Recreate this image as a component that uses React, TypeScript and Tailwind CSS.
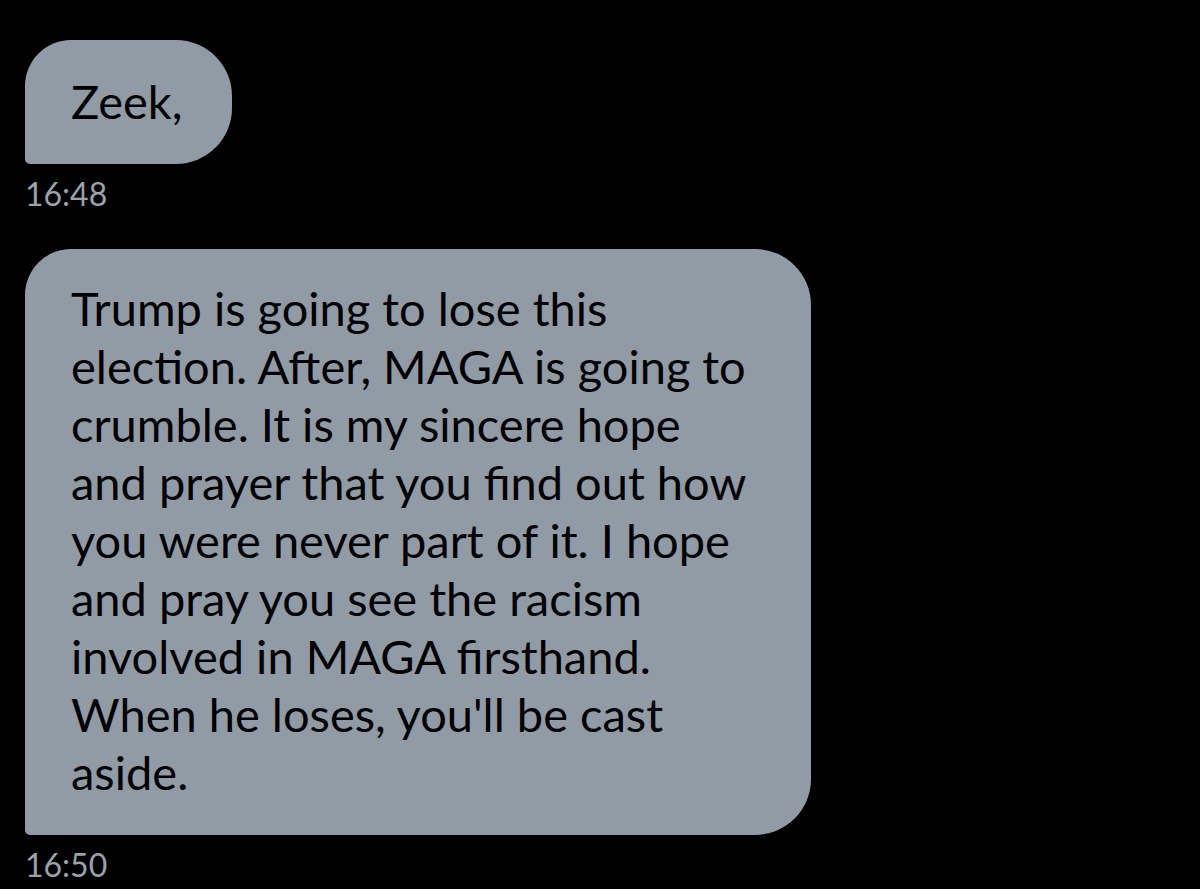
import React from "react";

interface MessageProps {
  lines: string[];
  time: string;
  width: string;
  pad: string;
}

const Message: React.FC<MessageProps> = ({ lines, time, width, pad }) => (
  <div className="flex flex-col items-start">
    <div
      className={`${width} ${pad} bg-[#919ba5] text-black rounded-tl-[46px] rounded-tr-[56px] rounded-br-[56px] rounded-bl-[5px] px-[46px] text-[47px] leading-[58px]`}
    >
      {lines.map((l, i) => (
        <div key={i} className="whitespace-nowrap">
          {l}
        </div>
      ))}
    </div>
    <div className="mt-[12px] text-[32px] leading-[36px] text-[#9aa2aa]">{time}</div>
  </div>
);

export default function App() {
  return (
    <div
      className="w-[1200px] h-[889px] bg-black overflow-hidden pl-[25px] pt-[40px] flex flex-col gap-[37px]"
      style={{ fontFamily: "Lato, 'Noto Sans', sans-serif" }}
    >
      <Message lines={["Zeek,"]} time="16:48" width="w-[207px]" pad="pt-[32px] pb-[34px]" />
      <Message
        lines={[
          "Trump is going to lose this",
          "election. After, MAGA is going to",
          "crumble. It is my sincere hope",
          "and prayer that you find out how",
          "you were never part of it. I hope",
          "and pray you see the racism",
          "involved in MAGA firsthand.",
          "When he loses, you'll be cast",
          "aside.",
        ]}
        time="16:50"
        width="w-[786px]"
        pad="pt-[30px] pb-[34px]"
      />
    </div>
  );
}
